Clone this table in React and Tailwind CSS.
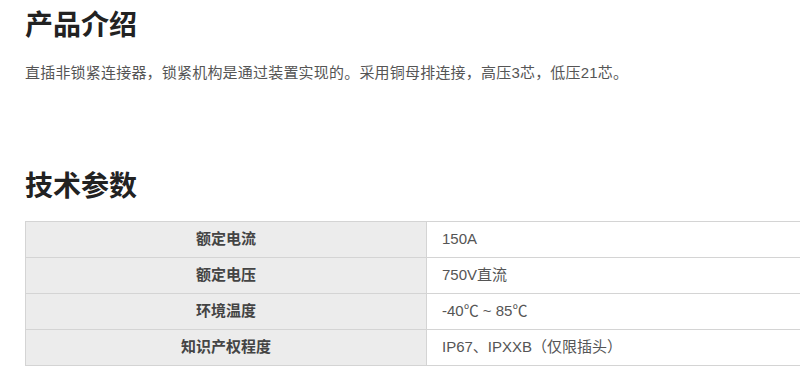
import React from 'react';

const specs = [
  ['额定电流', '150A'],
  ['额定电压', '750V直流'],
  ['环境温度', '-40℃ ~ 85℃'],
  ['知识产权程度', 'IP67、IPXXB（仅限插头）'],
];

function App() {
  return (
    <div
      className="w-[800px] h-[374px] overflow-hidden bg-white pl-[25px]"
      style={{ fontFamily: '"Liberation Sans", "Noto Sans CJK SC", sans-serif' }}
    >
      <h2 className="pt-[7px] text-[28px] leading-[38px] font-bold text-[#222]">产品介绍</h2>
      <p className="mt-[16px] text-[15px] leading-[24px] tracking-[0.2px] text-[#555]">
        直插非锁紧连接器，锁紧机构是通过装置实现的。采用铜母排连接，高压3芯，低压21芯。
      </p>

      <h2 className="mt-[83px] text-[28px] leading-[38px] font-bold text-[#222]">技术参数</h2>

      <table className="mt-[15px] w-[820px] border-collapse text-[15px]">
        <tbody>
          {specs.map(([k, v]) => (
            <tr key={k} className="h-[36px]">
              <td className="w-[401px] border border-[#d4d4d4] bg-[#ececec] text-center font-bold text-[#444]">
                {k}
              </td>
              <td className="border border-[#d4d4d4] pl-[15px] text-[#555]">{v}</td>
            </tr>
          ))}
        </tbody>
      </table>
    </div>
  );
}

export default App;
